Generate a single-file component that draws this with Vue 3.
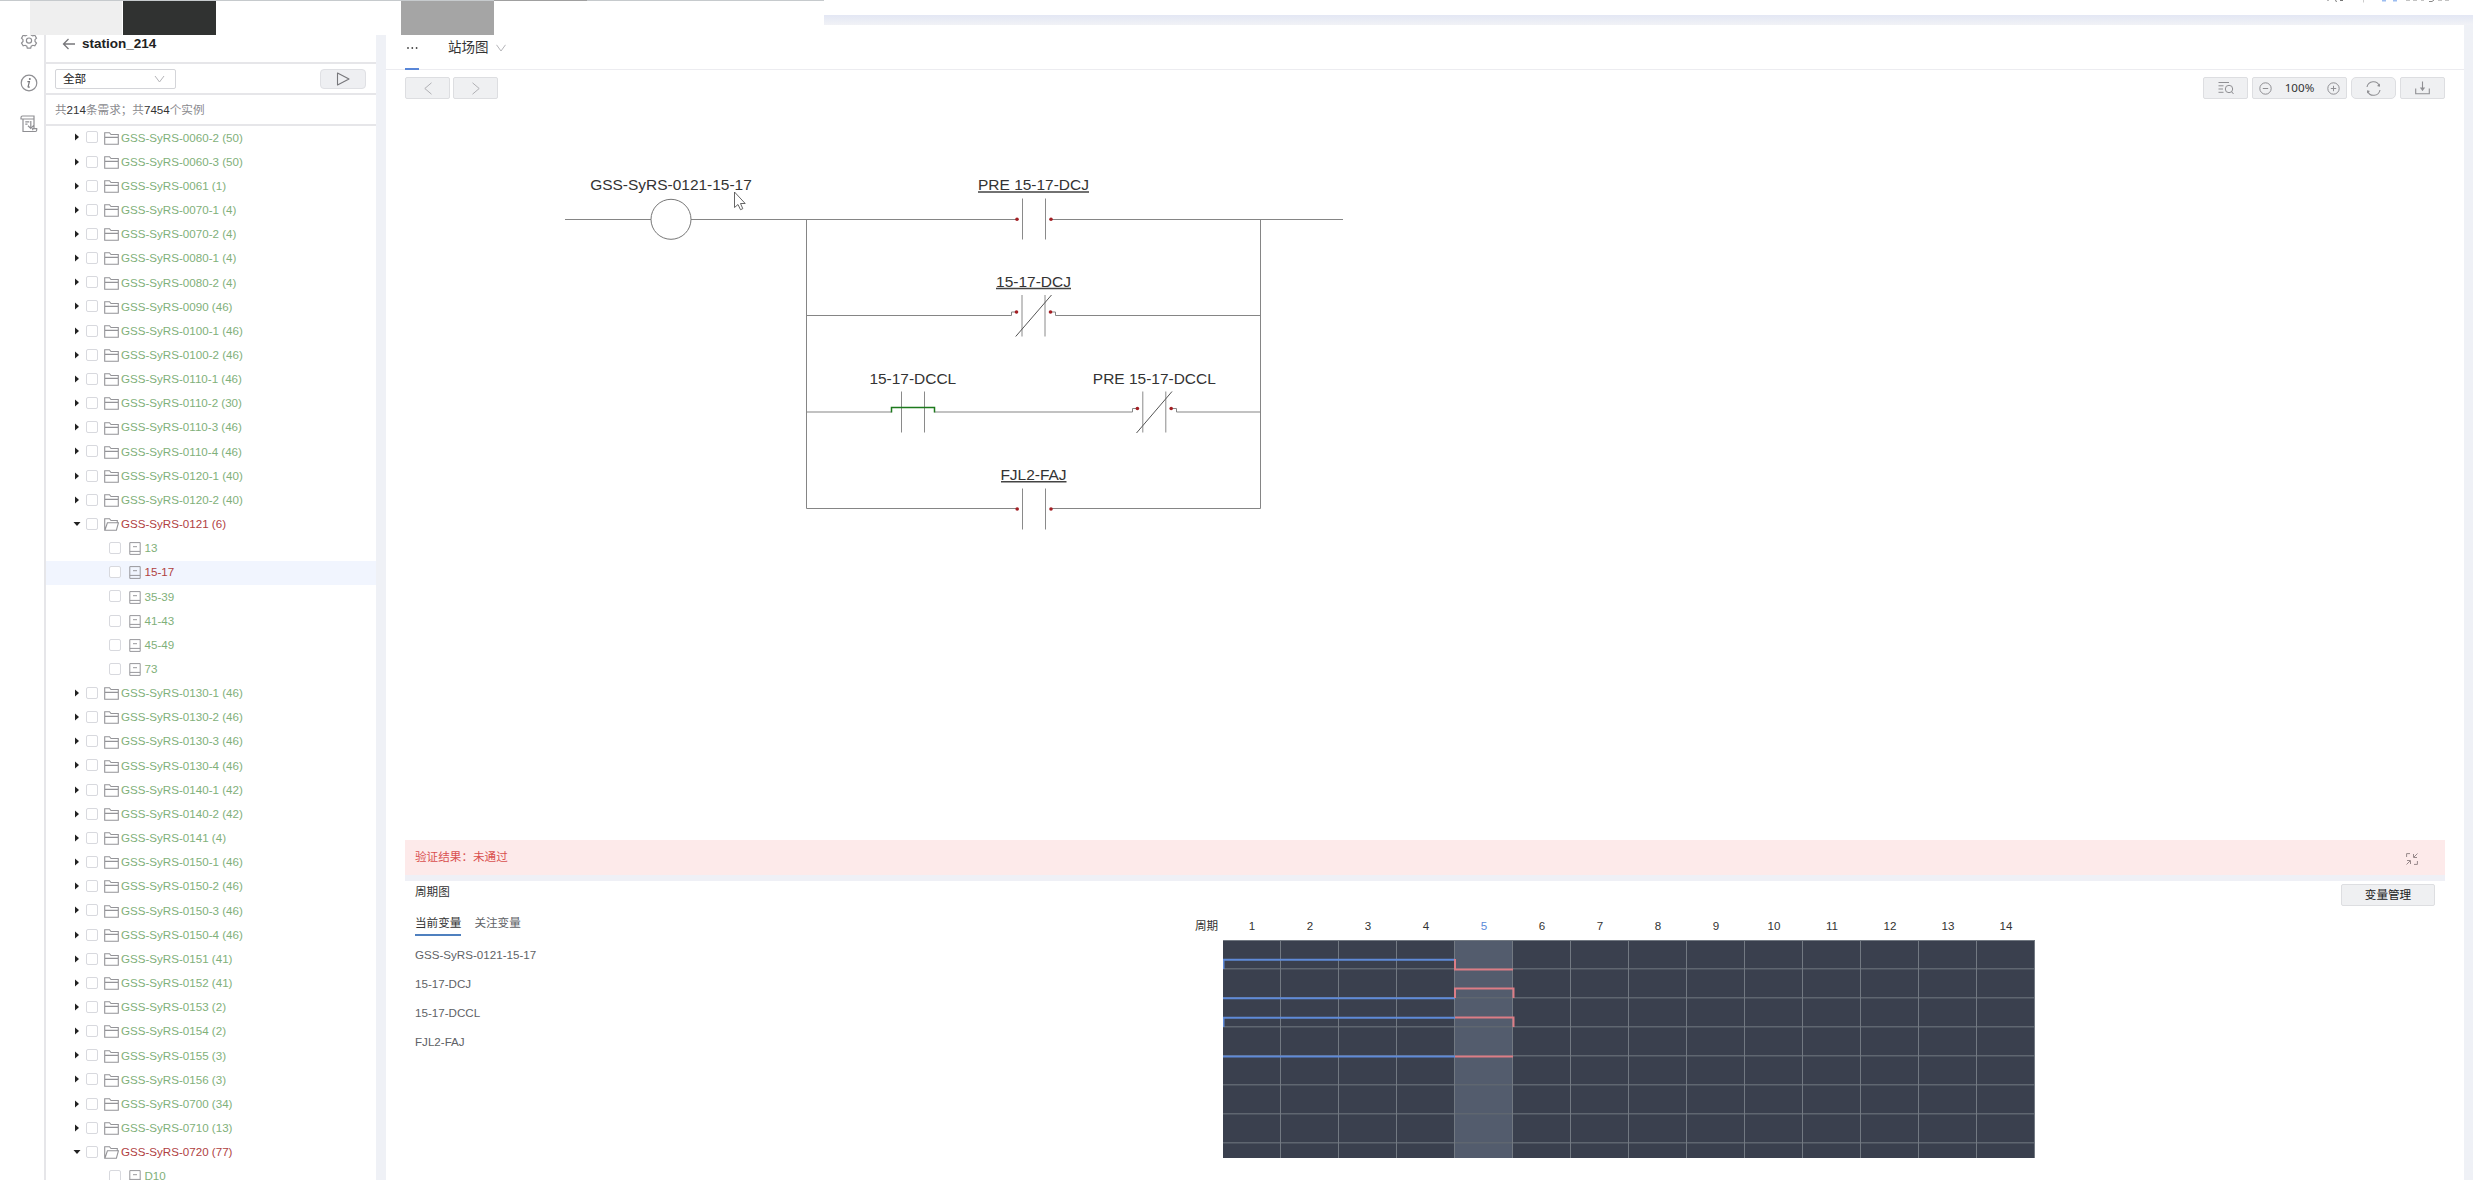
<script setup>
const group = (name, count) => ({ name, count })
const groups = [
  group('0060-2', 50), group('0060-3', 50), group('0061', 1), group('0070-1', 4),
  group('0070-2', 4), group('0080-1', 4), group('0080-2', 4), group('0090', 46),
  group('0100-1', 46), group('0100-2', 46), group('0110-1', 46), group('0110-2', 30),
  group('0110-3', 46), group('0110-4', 46), group('0120-1', 40), group('0120-2', 40),
  { name: '0121', count: 6, open: true, failed: true, children: ['13', '15-17', '35-39', '41-43', '45-49', '73'] },
  group('0130-1', 46), group('0130-2', 46), group('0130-3', 46), group('0130-4', 46),
  group('0140-1', 42), group('0140-2', 42), group('0141', 4), group('0150-1', 46),
  group('0150-2', 46), group('0150-3', 46), group('0150-4', 46), group('0151', 41),
  group('0152', 41), group('0153', 2), group('0154', 2), group('0155', 3),
  group('0156', 3), group('0700', 34), group('0710', 13),
  { name: '0720', count: 77, open: true, failed: true, children: ['D10'] },
]
const rows = groups.flatMap((g) => [
  { key: g.name, text: `GSS-SyRS-${g.name} (${g.count})`, open: g.open, failed: g.failed },
  ...(g.children || []).map((c) => ({
    key: `${g.name}/${c}`, text: c, leaf: true, failed: c === '15-17', selected: c === '15-17',
  })),
])

const variables = ['GSS-SyRS-0121-15-17', '15-17-DCJ', '15-17-DCCL', 'FJL2-FAJ']
const cycles = Array.from({ length: 14 }, (_, i) => i + 1)
const current = 5
</script>

<template>
  <div class="page">
    <header class="topbar">
      <svg class="account" width="130" height="3" viewBox="0 0 130 3">
        <path d="M6 0h2M14 .5l2 1M19 .5h3" stroke="#777" fill="none" />
        <path d="M42.5 0v2.5" stroke="#ccc" />
        <path d="M61 .5h4M72 .5h4" stroke="#9dbdf0" stroke-width="2" />
        <path d="M85 0h4M92 0h4M100 0h3M108 1.5h3l2-1.500M117 0h4M124 0h4" stroke="#888" fill="none" />
      </svg>
    </header>
    <div class="shade"></div>

    <div class="body">
      <nav class="rail">
        <svg width="18" height="18" viewBox="0 0 18 18" fill="none" stroke="#8f8f93" stroke-width="1.200">
          <path d="M7.300 1h3.400l.5 2 1.600.9 2-.6 1.700 2.900-1.500 1.500v1.800l1.500 1.500-1.700 2.900-2-.6-1.600.9-.5 2H7.300l-.5-2-1.600-.9-2 .6L1.500 11 3 9.500V7.700L1.500 6.200l1.700-2.900 2 .6L6.800 3z" />
          <circle cx="9" cy="8.600" r="2.600" />
        </svg>
        <svg width="18" height="18" viewBox="0 0 18 18" fill="none">
          <circle cx="9" cy="9" r="7.800" stroke="#8f8f93" stroke-width="1.200" />
          <circle cx="9.800" cy="5" r="1" fill="#77777b" />
          <path d="M7.400 7.700h2l-1.300 5q-.2 1 1.600.2" stroke="#77777b" stroke-width="1.200" />
        </svg>
        <svg width="18" height="18" viewBox="0 0 18 18" fill="none" stroke="#8f8f93" stroke-width="1.200">
          <path d="M14 13.500V1H2.500Q1 1 1 2.800V4h2.600M3 4v12.500h12.500q1.200 0 1.200-1.500v-1.400h-4v1.700M3 4h10.500M5.300 6.800h4M5.300 9.200h2.200M10.800 6v7.200M8 10.700l2.800 2.700 2.700-2.700" />
        </svg>
      </nav>

      <aside class="side">
        <div class="title">
          <svg width="14" height="12" viewBox="0 0 14 12" fill="none" stroke="#77777b" stroke-width="1.300">
            <path d="M13 6H1.500M6.500 1l-5 5 5 5" />
          </svg>
          <b>station_214</b>
        </div>
        <div class="filter">
          <div class="select">
            <span>全部</span>
            <svg width="11" height="8" viewBox="0 0 11 8" fill="none" stroke="#b4b4b8"><path d="M1 1l4.500 6L10 1" /></svg>
          </div>
          <div class="run">
            <svg width="14" height="14" viewBox="0 0 14 14" fill="none" stroke="#77777b" stroke-width="1.100" stroke-linejoin="round"><path d="M1.500 1v12L13 7z" /></svg>
          </div>
        </div>
        <div class="count">共<i>214</i>条需求；共<i>7454</i>个实例</div>
        <ul class="tree">
          <li v-for="r in rows" :key="r.key" :class="{ leaf: r.leaf, failed: r.failed, selected: r.selected }">
            <svg v-if="!r.leaf" class="caret" width="8" height="8" viewBox="0 0 8 8">
              <path v-if="r.open" d="M.5 2h7L4 6z" fill="#222" />
              <path v-else d="M2 .5v7L6 4z" fill="#222" />
            </svg>
            <span class="box"></span>
            <svg v-if="r.leaf" class="doc" width="12" height="13" viewBox="0 0 12 13" fill="none" stroke="#98989c">
              <path d="M.8.600h10.400v11.800H.8zM.8 9.400h10.400M4 4.700h4" />
            </svg>
            <svg v-else class="folder" width="15" height="13" viewBox="0 0 15 13" fill="none" stroke="#949498" stroke-width="1.100">
              <path v-if="r.open" d="M2.500 12.200H.7V.7h4.800L7 2.500h6.300v2.300M.9 12.200l2.500-7.400h11l-2 7.400z" />
              <path v-else d="M.7.700h4.800L7 2.500h7.300v9.700H.7zM.7 5.400h13.600" />
            </svg>
            <span>{{ r.text }}</span>
          </li>
        </ul>
      </aside>

      <main class="main">
        <div class="tabs">
          <svg class="dots" width="12" height="4" viewBox="0 0 12 4" fill="#444">
            <circle cx="2" cy="2" r=".9" /><circle cx="6.300" cy="2" r=".9" /><circle cx="10.600" cy="2" r=".9" />
          </svg>
          <span>站场图</span>
          <svg width="10" height="8" viewBox="0 0 10 8" fill="none" stroke="#b4b4b8"><path d="M.5.800L5 7 9.500.800" /></svg>
        </div>

        <div class="toolbar">
          <div class="btn">
            <svg width="8" height="13" viewBox="0 0 8 13" fill="none" stroke="#b0b0b4"><path d="M7.500.800L.8 6.500l6.700 5.700" /></svg>
          </div>
          <div class="btn next">
            <svg width="8" height="13" viewBox="0 0 8 13" fill="none" stroke="#b0b0b4"><path d="M.5.800l6.700 5.700-6.700 5.700" /></svg>
          </div>
          <div class="gap"></div>
          <div class="btn">
            <svg width="16" height="14" viewBox="0 0 16 14" fill="none" stroke="#8f8f93">
              <path d="M.5 1.500h10.500M.5 4.800h5M.5 8h4.500M.5 11.300h5M13.500 10.500l2 2.500" /><circle cx="11" cy="8" r="3.700" />
            </svg>
          </div>
          <div class="btn zoom">
            <svg width="13" height="13" viewBox="0 0 13 13" fill="none" stroke="#8f8f93"><circle cx="6.500" cy="6.500" r="5.700" /><path d="M3.800 6.500h5.400" /></svg>
            <span>100%</span>
            <svg width="13" height="13" viewBox="0 0 13 13" fill="none" stroke="#8f8f93"><circle cx="6.500" cy="6.500" r="5.700" /><path d="M3.800 6.500h5.400M6.500 3.800v5.400" /></svg>
          </div>
          <div class="btn round">
            <svg width="15" height="15" viewBox="0 0 15 15" fill="none" stroke="#8f8f93" stroke-width="1.100">
              <path d="M1 6A6.500 6.500 0 0 1 13.500 5M14 9A6.500 6.500 0 0 1 1.500 10" />
              <path d="M13.900 2.600v3.100l-2.900-.6zM1.100 12.400V9.300l2.900.6z" fill="#8f8f93" stroke="none" />
            </svg>
          </div>
          <div class="btn">
            <svg width="15" height="14" viewBox="0 0 15 14" fill="none" stroke="#8f8f93" stroke-width="1.100">
              <path d="M.7 7.500v5.300h13.600V7.500M7.500.5v9" /><path d="M4.800 6.500h5.400L7.500 10z" fill="#8f8f93" stroke="none" />
            </svg>
          </div>
        </div>

        <svg class="circuit" width="2040" height="741" viewBox="405 99 2040 741">
          <g fill="none" stroke="#858585">
            <path d="M565 219.500H651M691 219.500H1016M1051 219.500H1343" />
            <path d="M806.500 219V508.500H1017M1051 508.500H1260.500V219" />
            <path d="M806.500 315.500H1011.500V312H1016M1051 312h4.500v3.500H1260.500" />
            <path d="M806.500 412H891.500M934.500 412H1132.500v-3.500h4.500M1171 408.500h5.500v3.500H1260.500" />
          </g>
          <circle cx="671" cy="219.300" r="20" fill="#fff" stroke="#777" />
          <g fill="none" stroke="#8a8a8a">
            <path d="M1022.500 198.500v41M1045.500 198.500v41M1022 295v41.500M1045 295v41.500" />
            <path d="M901.500 391.500v41M924.500 391.500v41M1142.800 391.500v41M1165.800 391.500v41" />
            <path d="M1022.500 488.500v41M1045.500 488.500v41" />
          </g>
          <path d="M1015.700 336.500L1051.500 295M1136.500 433L1172 391.500" stroke="#555" fill="none" />
          <path d="M891.500 412.500v-5h43v5" fill="none" stroke="#1d7a1d" stroke-width="1.500" />
          <g fill="#a31f24">
            <circle cx="1017" cy="219.300" r="1.800" /><circle cx="1051" cy="219.300" r="1.800" />
            <circle cx="1016.500" cy="312" r="1.800" /><circle cx="1050.500" cy="312" r="1.800" />
            <circle cx="1137.400" cy="408.500" r="1.800" /><circle cx="1171.200" cy="408.500" r="1.800" />
            <circle cx="1017.200" cy="509" r="1.800" /><circle cx="1051" cy="509" r="1.800" />
          </g>
          <g class="label">
            <text x="671" y="190">GSS-SyRS-0121-15-17</text>
            <text x="1033.500" y="190">PRE 15-17-DCJ</text>
            <text x="1033.500" y="287">15-17-DCJ</text>
            <text x="912.800" y="383.500">15-17-DCCL</text>
            <text x="1154.300" y="383.500">PRE 15-17-DCCL</text>
            <text x="1033.500" y="480">FJL2-FAJ</text>
          </g>
          <path d="M978 192h111M996 288.500h75M1001 481.700h65.500" stroke="#444" stroke-width="1.500" />
          <path d="M734.500 192v15.500l3.500-3 2.500 5.200 2.300-1-2.300-5.200h4.700z" fill="#fff" stroke="#555" stroke-width=".9" />
        </svg>

        <div class="result">
          <span>验证结果：未通过</span>
          <svg width="12" height="12" viewBox="0 0 12 12" fill="none" stroke="#98898b">
            <path d="M.6 4V.6H4M8 11.400h3.400V8M11.500.5L8 4M7.500 1v3.500H11M.5 11.500L4 8M1 7.500h3.500V11" />
          </svg>
        </div>
        <div class="split"></div>

        <section class="cycle">
          <div class="vars">
            <h4>周期图</h4>
            <div class="subtabs"><span class="on">当前变量</span><span>关注变量</span></div>
            <p v-for="v in variables" :key="v">{{ v }}</p>
          </div>
          <div class="axis">周期</div>
          <div class="chart">
            <div class="heads">
              <span v-for="c in cycles" :key="c" :class="{ now: c === current }">{{ c }}</span>
            </div>
            <svg width="812" height="218" viewBox="0 0 812 218">
              <rect width="812" height="218" fill="#3a404e" />
              <rect x="232" width="58" height="218" fill="#535c6d" />
              <g stroke="#727982">
                <path v-for="n in 7" :key="'r' + n" :d="`M0 ${n * 29 - 0.2}H812`" stroke-width="1.500" stroke="#5f6670" />
                <path v-for="n in 13" :key="'c' + n" :d="`M${n * 58 - 0.5} 0V218`" />
                <path d="M0 .5H812M811.500 0V218" />
              </g>
              <g fill="none" stroke="#5f8ad8" stroke-width="2">
                <path d="M.5 29V19.800H232M0 58.300H232M.5 87V77.800H232M0 116.500H232" />
              </g>
              <g fill="none" stroke="#dc7d86" stroke-width="2">
                <path d="M232 19v10.500h58M232 58v-9.500h58.500V58M232 77.500h58.500V87M232 116.500h58" />
              </g>
            </svg>
          </div>
          <div class="manage">变量管理</div>
        </section>
      </main>
    </div>

    <div class="strip">
      <i class="light"></i><i class="dark"></i><i class="mid"></i><i class="edge"></i>
    </div>
  </div>
</template>

<style>
body { background: #fff; overflow: hidden; }
</style>

<style scoped>
* { box-sizing: border-box; }
.page {
  position: relative;
  width: 2473px;
  height: 1180px;
  overflow: hidden;
  display: flex;
  flex-direction: column;
  background: #eff1f6;
  color: #333;
  font: 11.6px/1 "Liberation Sans", "Noto Sans CJK SC", sans-serif;
}
svg { display: block; flex: none; }
.topbar { height: 15px; flex: none; background: #fff; display: flex; justify-content: flex-end; }
.account { margin-right: 22px; }
.shade { height: 10px; flex: none; background: linear-gradient(#e3e7f4, #f1f2f6); }
.body { flex: 1; display: flex; min-height: 0; }

.rail {
  width: 46px;
  flex: none;
  background: #fff;
  border-right: 2px solid #e6e6e9;
  padding: 7px 0 0 20px;
  display: flex;
  flex-direction: column;
  gap: 23.500px;
}

.side { width: 330px; flex: none; background: #fff; display: flex; flex-direction: column; min-height: 0; }
.title {
  height: 39px;
  flex: none;
  border-bottom: 2px solid #e6e6e9;
  display: flex;
  align-items: center;
  gap: 6px;
  padding-left: 16px;
  color: #222;
  font-size: 13.500px;
}
.filter {
  height: 31px;
  flex: none;
  border-bottom: 2px solid #e6e6e9;
  display: flex;
  justify-content: space-between;
  align-items: center;
  padding: 0 10px 0 9px;
}
.select {
  width: 121px;
  height: 20px;
  border: 1px solid #d4d5d9;
  border-radius: 2px;
  display: flex;
  align-items: center;
  justify-content: space-between;
  padding: 0 10px 0 7px;
  color: #222;
}
.run {
  width: 46px;
  height: 20px;
  border: 1px solid #dfe0e4;
  border-radius: 4px;
  background: #eeeff2;
  display: flex;
  align-items: center;
  justify-content: center;
}
.count { height: 31px; flex: none; border-bottom: 2px solid #e6e6e9; padding-left: 9px; line-height: 29px; color: #8a8a8e; }
.count i { font-style: normal; color: #333; }
.tree { list-style: none; margin: 0; padding: 0; overflow: hidden; flex: 1; }
.tree li {
  height: 24.170px;
  display: flex;
  align-items: center;
  padding: 0 0 1.400px 27px;
  color: #7fb07a;
  white-space: nowrap;
}
.tree li.leaf { padding-left: 63px; }
.tree li.failed { color: #b0413f; }
.tree li.selected { background: #f1f5fe; }
.caret { margin-right: 5px; }
.box { width: 12px; height: 12px; border: 1px solid #d8d9de; border-radius: 2px; background: #fff; flex: none; }
.folder { margin: 1.500px 2px 0 6px; }
.doc { margin: 1.500px 3.500px 0 8px; }

.main { width: 2078px; flex: none; margin-left: 10px; background: #fff; display: flex; flex-direction: column; }
.tabs {
  height: 45px;
  flex: none;
  border-bottom: 1px solid #ececf0;
  position: relative;
  display: flex;
  align-items: center;
  padding: 1px 0 0 20px;
  color: #333;
  font-size: 13.500px;
}
.tabs::after { content: ""; position: absolute; left: 19px; bottom: -1px; width: 14px; height: 2px; background: #5886d8; }
.dots { margin-right: 30px; }
.tabs span { margin-right: 7px; }
.toolbar { height: 29px; flex: none; padding: 7px 19px 0; display: flex; gap: 4px; }
.next { margin-left: -1px; }
.gap { flex: 1; }
.btn {
  width: 45px;
  height: 22px;
  border: 1px solid #dddee1;
  border-radius: 2px;
  background: #eff0f2;
  display: flex;
  align-items: center;
  justify-content: center;
}
.btn.zoom { width: 95px; justify-content: space-between; padding: 0 6px; }
.zoom span { font-family: "Noto Sans", sans-serif; color: #333; }
.btn.round { border-radius: 5px; }
.circuit { margin-left: 19px; }
.label text {
  font: 15.470px "Liberation Sans", sans-serif;
  text-anchor: middle;
  fill: #333;
}
.result {
  height: 35px;
  flex: none;
  margin: 0 19px;
  padding: 0 27px 1px 10px;
  background: #fdeaea;
  color: #d9504f;
  display: flex;
  justify-content: space-between;
  align-items: center;
}
.result svg { margin-top: 3px; }
.split { height: 6px; flex: none; margin: 0 19px; background: #eff0f6; }
.cycle { flex: 1; margin: 0 19px; display: flex; }
.vars { width: 780px; padding-left: 10px; color: #606266; }
.vars h4 { margin: 0; font-weight: 400; height: 22px; line-height: 22px; color: #333; }
.subtabs { display: flex; gap: 13px; margin-top: 8px; height: 29px; }
.subtabs span { height: 25px; line-height: 23px; }
.subtabs .on { color: #333; border-bottom: 2px solid #4f80bf; }
.vars p { margin: 0; height: 29px; line-height: 29px; }
.axis { width: 38px; padding: 34px 0 0 10px; line-height: 21px; color: #333; white-space: nowrap; }
.chart { width: 812px; padding-top: 34px; }
.heads { display: flex; height: 25px; line-height: 21px; }
.heads span { width: 58px; text-align: center; }
.heads .now { color: #5a8ad8; }
.manage {
  width: 94px;
  height: 22px;
  margin: 3px 10px 0 auto;
  border: 1px solid #dddee1;
  border-radius: 2px;
  background: #eff0f2;
  line-height: 20px;
  text-align: center;
  color: #222;
}

.strip { position: absolute; left: 0; top: 0; width: 824px; height: 34.500px; background: #fff; border-top: 1px solid #c6cacd; display: flex; }
.strip i { display: block; height: 33.500px; }
.light { width: 92px; margin-left: 30px; background: #efefef; }
.dark { width: 93px; margin-left: 1px; background: #303231; }
.mid { width: 93px; margin-left: 185px; background: #a5a5a5; }
.strip .edge { width: 93px; margin-top: -1px; height: 1px; background: #a0a0a0; }
</style>
